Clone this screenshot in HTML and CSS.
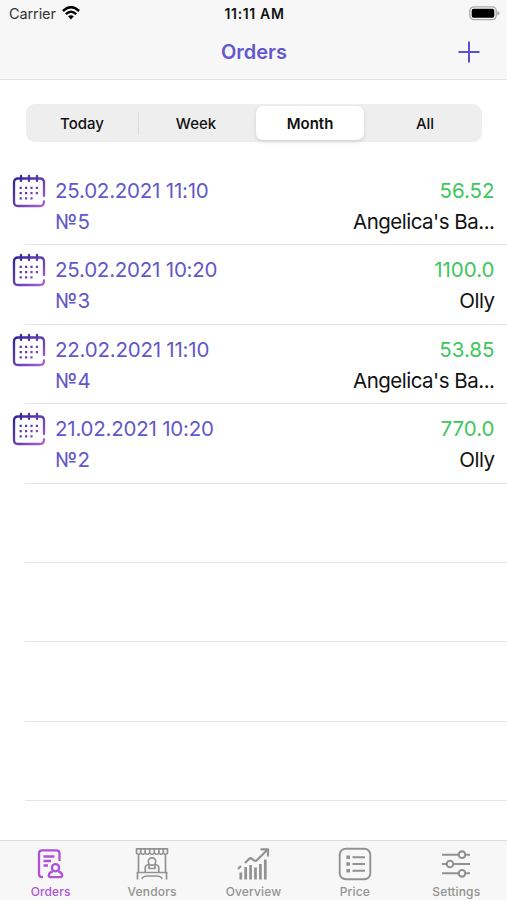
FILE: index.html
```html
<!DOCTYPE html>
<html lang="en">
<head>
<meta charset="utf-8">
<title>Orders</title>
<link rel="stylesheet" href="styles.css">
</head>
<body>
<svg class="defs" width="0" height="0" aria-hidden="true">
  <defs>
    <linearGradient id="violet" gradientUnits="userSpaceOnUse" x1="4" y1="4" x2="34" y2="34"><stop offset="0" stop-color="#37259b"/><stop offset=".5" stop-color="#6940b5"/><stop offset="1" stop-color="#bd68d3"/></linearGradient>
    <symbol id="calendar" viewBox="0 0 34 34">
      <g fill="none" stroke="url(#violet)" stroke-width="2.3" stroke-linecap="round">
        <path d="M32 22V8.500Q32 4.500 28 4.500H6Q2 4.500 2 8.500V28Q2 32 6 32H28Q32 32 32 27.500"/>
        <path d="M9 2V7M17 2V7M25 2V7"/>
      </g>
      <path d="M7.600 13.800H26.200M7.600 19.200H26.200M7.600 24.400H20.600" fill="none" stroke="url(#violet)" stroke-width="2.200" stroke-dasharray="2.200 3.200"/>
    </symbol>
  </defs>
</svg>
<div class="screen">
  <header class="top">
    <div class="status">
      <div class="carrier"><span>Carrier</span>
        <svg width="18" height="14" viewBox="0 0 18 14"><g fill="none" stroke="#000" stroke-width="2.400"><path d="M.9 5Q9-2.500 17.100 5"/><path d="M3.800 8.100Q9 3.400 14.200 8.100"/></g><path d="M6.100 10.300Q9 8 11.900 10.300L9 13.400Z"/></svg>
      </div>
      <div class="clock">11:11 AM</div>
      <svg class="battery" width="31" height="15" viewBox="0 0 31 15"><rect x=".8" y=".8" width="26.400" height="12.800" rx="4" fill="#f8f8f8" stroke="#aaa" stroke-width="1.300"/><rect x="2.700" y="2.700" width="22.600" height="9" rx="2" fill="#000"/><path d="M28.400 5Q30.500 5.500 30.500 7.200T28.400 9.500Z" fill="#aaa"/></svg>
    </div>
    <div class="nav">
      <span></span><h1>Orders</h1>
      <svg class="plus" width="22" height="22" viewBox="0 0 22 22"><path d="M11 .5V21.500M.5 11H21.500" stroke="#5b50cf" stroke-width="2"/></svg>
    </div>
  </header>
  <nav class="segments">
    <span class="segment divided">Today</span><span class="segment">Week</span><span class="segment selected">Month</span><span class="segment">All</span>
  </nav>
  <main class="list">
    <div class="row"><svg class="cal"><use href="#calendar"/></svg><div class="body"><div class="line"><span class="date">25.02.2021 11:10</span><span class="sum">56.52</span></div><div class="line"><span class="num">№5</span><span class="vendor">Angelica's Ba...</span></div></div></div>
    <div class="row"><svg class="cal"><use href="#calendar"/></svg><div class="body"><div class="line"><span class="date">25.02.2021 10:20</span><span class="sum">1100.0</span></div><div class="line"><span class="num">№3</span><span class="vendor">Olly</span></div></div></div>
    <div class="row"><svg class="cal"><use href="#calendar"/></svg><div class="body"><div class="line"><span class="date">22.02.2021 11:10</span><span class="sum">53.85</span></div><div class="line"><span class="num">№4</span><span class="vendor">Angelica's Ba...</span></div></div></div>
    <div class="row"><svg class="cal"><use href="#calendar"/></svg><div class="body"><div class="line"><span class="date">21.02.2021 10:20</span><span class="sum">770.0</span></div><div class="line"><span class="num">№2</span><span class="vendor">Olly</span></div></div></div>
    <div class="row"></div><div class="row"></div><div class="row"></div><div class="row"></div>
  </main>
  <footer class="tabs">
    <div class="tab active">
      <svg viewBox="0 0 34 34"><g stroke-width="2.300"><path d="M9 30.200H8Q5 30.200 5 27V6.500Q5 3.300 8 3.300H22.500Q25.500 3.300 25.500 6.500V14M9.500 9.500H20.500M9.500 14H17M9.500 18.500H14"/><circle cx="21.500" cy="20.700" r="3.600"/><path d="M18.800 24.300Q14.800 25.500 14.800 28.300Q14.800 30.200 16.800 30.200H26Q28.200 30.200 28.200 28.300Q28.200 25.500 24.200 24.300"/></g></svg>
      <span>Orders</span></div>
    <div class="tab">
      <svg viewBox="0 0 34 34"><g stroke-width="1.700"><path d="M1.500 1.800H32.500V6Q30.500 8.500 28.300 6Q26.100 8.500 23.900 6Q21.700 8.500 19.300 6Q17 8.500 14.700 6Q12.300 8.500 10.100 6Q7.900 8.500 5.700 6Q3.500 8.500 1.500 6ZM5.700 2V6M10.100 2V6M14.700 2V6M19.300 2V6M23.900 2V6M28.300 2V6M3.500 8V25M30.500 8V25M1.500 25.500H32.500M2.500 25.500V32.500M31.500 25.500V32.500M7 32Q8 29 12 29H22Q26 29 27 32"/><circle cx="17" cy="14.500" r="3.700"/><path d="M10.200 25V21Q10.200 18 14 17.500M20 17.500Q23.800 18 23.800 21V25M14 17.500V21.500H20V17.500"/></g></svg>
      <span>Vendors</span></div>
    <div class="tab">
      <svg viewBox="0 0 34 34"><g stroke-width="2.200"><path d="M2 22L5 19M9 16L13 12Q14.500 10.500 16.200 12L18 13.400Q19.500 14.500 21 13L31.500 2.800M24.500 2.300H32V9.500"/><path d="M4.800 25.500V32.500M9.700 20V32.500M14.600 18V32.500M19.500 20.500V32.500M24.400 17V32.500M29.300 12.500V32.500" stroke-width="2.700"/></g></svg>
      <span>Overview</span></div>
    <div class="tab">
      <svg viewBox="0 0 34 34"><rect x="1.700" y="1.700" width="30.600" height="30.600" rx="6" stroke-width="1.900"/><path d="M14.500 10.200H27M14.500 17H27M14.500 23.800H27" stroke-width="1.900"/><path d="M8.300 10.200H12M8.300 17H12M8.300 23.800H12" stroke-width="3.600"/></svg>
      <span>Price</span></div>
    <div class="tab">
      <svg viewBox="0 0 34 34"><g stroke-width="2.100"><path d="M3 7.700H19.500M26.500 7.700H31M3 17H7.500M14.500 17H31M3 26.300H19.500M26.500 26.300H31"/><circle cx="23" cy="7.700" r="3.300"/><circle cx="11" cy="17" r="3.300"/><circle cx="23" cy="26.300" r="3.300"/></g></svg>
      <span>Settings</span></div>
  </footer>
</div>
</body>
</html>
```
FILE: styles.css
```css
* { box-sizing: border-box; }
body { margin: 0; background: #fff; color: #111; font-family: Inter, "Liberation Sans", sans-serif; }
svg { display: block; }
.defs { position: absolute; }
.screen { width: 507px; height: 900px; display: flex; flex-direction: column; overflow: hidden; }
.top { height: 79.5px; flex: none; background: #f7f7f7; border-bottom: 1px solid #e0e0e0; }
.status { height: 27px; display: grid; grid-template-columns: 1fr auto 1fr; align-items: center; padding: 0 7px 0 9px; font-size: 14.5px; }
.carrier { display: flex; align-items: center; gap: 6px; color: #333; letter-spacing: -.1px; }
.carrier svg { margin-top: -2px; }
.clock { font-weight: 600; font-size: 14px; letter-spacing: .65px; }
.battery { justify-self: end; }
.nav { height: 51px; display: grid; grid-template-columns: 1fr auto 1fr; align-items: center; padding: 0 27px 0 28px; }
.nav h1 { margin: -1px 0 0; color: #6258ce; font-size: 20px; font-weight: 600; }
.plus { justify-self: end; margin-top: -1px; }
.segments { flex: none; height: 38px; margin: 24.5px 25px 0 26px; background: #eee; border-radius: 9px; display: grid; grid-template-columns: repeat(4, 1fr); align-items: center; }
.segment { height: 34px; line-height: 35px; text-align: center; font-size: 15px; font-weight: 500; padding-right: 2px; }
.segment:last-child { padding: 0; }
.divided { height: 23px; line-height: 23px; padding: 0; margin-right: 1px; border-right: 1px solid #d8d8d8; }
.selected { margin: 0 4px 0 2px; padding: 0; background: #fff; border-radius: 7px; font-weight: 600; box-shadow: 0 2px 4px rgba(0,0,0,.12); }
.list { flex: none; height: 698px; margin-top: 24px; }
.row { height: 79.4px; display: flex; gap: 9px; padding: 9px 12.5px 0 12px; background: linear-gradient(#e5e5e5, #e5e5e5) 25px 100% / 100% 1px no-repeat; }
.cal { width: 34px; height: 34px; flex: none; margin-top: -1px; }
.body { flex: 1; }
.line { height: 31px; line-height: 32px; display: flex; justify-content: space-between; font-size: 20.5px; white-space: nowrap; }
.date, .num { color: #6258c9; }
.date { letter-spacing: -.22px; }
.vendor { letter-spacing: -.5px; }
.sum { color: #3ec65c; }
.tabs { flex: none; height: 60px; margin-top: -24px; position: relative; background: #f7f7f7; border-top: 1px solid #dcdcdc; display: grid; grid-template-columns: repeat(5, 1fr); }
.tab { color: #929292; display: flex; flex-direction: column; align-items: center; padding-top: 5.5px; font-size: 12px; font-weight: 500; line-height: 16px; letter-spacing: .15px; gap: 3px; }
.tab svg { width: 34px; height: 34px; fill: none; stroke: currentColor; stroke-linecap: butt; stroke-linejoin: round; }
.active { color: #b052d6; }
```
